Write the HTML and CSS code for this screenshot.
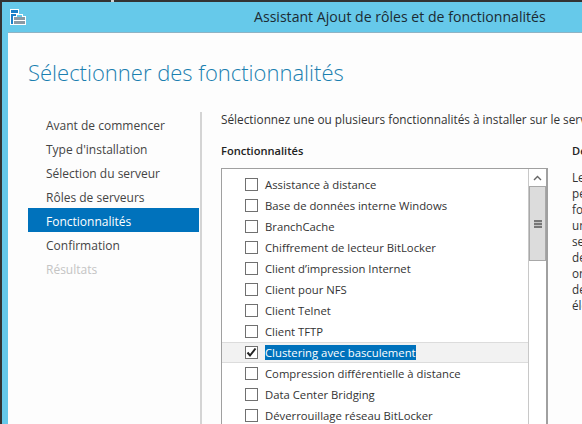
FILE: index.html
```html
<!DOCTYPE html>
<html lang="fr">
<head>
  <meta charset="UTF-8">
  <title>Assistant Ajout de rôles et de fonctionnalités</title>
  <link rel="stylesheet" href="styles.css">
</head>
<body>
  <div class="window">
    <header class="titlebar">
      <svg class="app-icon" width="16" height="16" viewBox="0 0 16 16">
        <path d="M0 0h9v16H0z" fill="#fff"/>
        <path d="M1 1h7v3H1zM1 5h7v10H1z" fill="#1a7fc8"/>
        <path d="M3 7h13v9H3zM6 5h7v2H6z" fill="#fff"/>
        <path d="M4 8h11v3H4zM4 12h11v3H4z" fill="#8a9aa5"/>
        <path d="M7 6h5v2H7z" fill="#66c9ea"/>
      </svg>
      <h2 class="wizard-name">Assistant Ajout de rôles et de fonctionnalités</h2>
    </header>
    <div class="content">
      <h1 class="page-title">Sélectionner des fonctionnalités</h1>
      <div class="columns">
        <nav class="steps">
          <a>Avant de commencer</a>
          <a>Type d'installation</a>
          <a>Sélection du serveur</a>
          <a>Rôles de serveurs</a>
          <a class="current">Fonctionnalités</a>
          <a>Confirmation</a>
          <a class="disabled">Résultats</a>
        </nav>
        <section class="panel">
          <p class="intro">Sélectionnez une ou plusieurs fonctionnalités à installer sur le serveur sélectionné.</p>
          <div class="panel-cols">
            <div class="features">
              <h3 class="label">Fonctionnalités</h3>
              <div class="listbox">
                <ul class="feature-list">
                  <li><span class="box"></span><span>Assistance à distance</span></li>
                  <li><span class="box"></span><span>Base de données interne Windows</span></li>
                  <li><span class="box"></span><span>BranchCache</span></li>
                  <li><span class="box"></span><span>Chiffrement de lecteur BitLocker</span></li>
                  <li><span class="box"></span><span>Client d’impression Internet</span></li>
                  <li><span class="box"></span><span>Client pour NFS</span></li>
                  <li><span class="box"></span><span>Client Telnet</span></li>
                  <li><span class="box"></span><span>Client TFTP</span></li>
                  <li class="selected">
                    <span class="box">
                      <svg width="11" height="11" viewBox="0 0 11 11"><path d="M1.500 5.500l2.500 3 5.500-7" fill="none" stroke="#222" stroke-width="2"/></svg>
                    </span>
                    <span class="hl">Clustering avec basculement</span>
                  </li>
                  <li><span class="box"></span><span>Compression différentielle à distance</span></li>
                  <li><span class="box"></span><span>Data Center Bridging</span></li>
                  <li><span class="box"></span><span>Déverrouillage réseau BitLocker</span></li>
                </ul>
                <div class="scrollbar">
                  <div class="arrow">
                    <svg width="9" height="6" viewBox="0 0 9 6"><path d="M1 5l3.500-3.500L8 5" fill="none" stroke="#666" stroke-width="1.400"/></svg>
                  </div>
                  <div class="thumb"><span class="grip"></span></div>
                </div>
              </div>
            </div>
            <aside class="description">
              <h3 class="label">Description</h3>
              <p>Le clustering</p>
              <p>permet à des</p>
              <p>fonctionner</p>
              <p>un service</p>
              <p>serveurs</p>
              <p>des services</p>
              <p>ont une</p>
              <p>de</p>
              <p>élevée</p>
            </aside>
          </div>
        </section>
      </div>
    </div>
  </div>
</body>
</html>
```

FILE: styles.css
```css
html, body {
  margin: 0;
  height: 100%;
  overflow: hidden;
}
body {
  font-family: "Open Sans", "Noto Sans", sans-serif;
  font-size: 12px;
  color: #333;
  background: #fff;
}
.window {
  height: 424px;
  box-sizing: border-box;
  border-top: 2px solid #333;
  border-left: 2px solid #333;
  background: #66c9ea;
  padding-left: 6px;
  display: flex;
  flex-direction: column;
  position: relative;
}
/* little notch of whatever is behind the window */
.window::before {
  content: "";
  position: absolute;
  left: 109px;
  top: -2px;
  width: 3px;
  height: 2px;
  background: #d0d0d0;
}
.titlebar {
  height: 30px;
  flex: none;
  margin-left: -6px;
  padding-left: 8px;
  display: flex;
  align-items: flex-start;
  position: relative;
}
.app-icon {
  margin-top: 7px;
}
.wizard-name {
  margin: 0;
  font-size: 14.100px;
  font-weight: 400;
  color: #1c2b33;
  position: absolute;
  left: 252px;
  top: 5px;
}
.content {
  flex: 1;
  background: #fdfdfd;
  border-top: 1px solid #8fb3c4;
  overflow: hidden;
}
.page-title {
  margin: 0;
  padding: 23px 0 0 20px;
  height: 56px;
  box-sizing: border-box;
  font-size: 22px;
  font-weight: 300;
  line-height: 32px;
  color: #1a7fb0;
}
.columns {
  display: flex;
  margin-left: 20px;
  padding-top: 23px;
}
.steps {
  width: 171px;
  flex: none;
  display: flex;
  flex-direction: column;
}
.steps a {
  height: 22px;
  line-height: 24px;
  padding: 2px 0 0 18px;
  color: #444;
}
.steps a.current {
  background: #0072bc;
  color: #fff;
}
.steps a.disabled {
  color: #c4c4c4;
}
.panel {
  flex: 1;
  min-width: 0;
  margin-left: 1px;
  border-left: 2px solid #d4d4d4;
  padding-left: 19px;
  height: 320px;
  overflow: hidden;
}
.intro {
  margin: 0;
  font-size: 11.800px;
  line-height: 15px;
  height: 16px;
  white-space: nowrap;
}
.panel-cols {
  display: flex;
  margin-top: 14px;
}
.label {
  margin: 0;
  font-size: 11.100px;
  font-weight: 600;
  line-height: 18px;
  height: 16px;
  color: #222;
}
.features {
  width: 327px;
  flex: none;
}
.listbox {
  margin-top: 10px;
  height: 280px;
  background: #fff;
  border: 1px solid #a0a0a0;
  border-width: 1px 2px 0 1px;
  display: flex;
}
.feature-list {
  list-style: none;
  margin: 0;
  padding: 5px 0 0;
  flex: 1;
  min-width: 0;
  font-size: 11.300px;
}
.feature-list li {
  height: 21px;
  display: flex;
  align-items: center;
  padding-left: 23px;
  box-sizing: border-box;
  white-space: nowrap;
}
.box {
  width: 13px;
  height: 13px;
  border: 1px solid #707070;
  box-sizing: border-box;
  margin-right: 7px;
  background: #fff;
  flex: none;
  display: flex;
  align-items: center;
  justify-content: center;
}
.feature-list li.selected {
  background: #f2f2f2;
  border-top: 1px solid #dcdcdc;
  border-bottom: 1px solid #dcdcdc;
}
.hl {
  background: #0072bc;
  color: #fff;
  line-height: 15px;
}
.scrollbar {
  width: 17px;
  flex: none;
  border-left: 1px solid #c8c8c8;
}
.arrow {
  height: 17px;
  display: flex;
  align-items: center;
  justify-content: center;
}
.thumb {
  height: 75px;
  box-sizing: border-box;
  border: 1px solid #a8a8a8;
  background: #dcdcdc;
  display: flex;
  align-items: center;
  justify-content: center;
}
.grip {
  width: 8px;
  height: 8px;
  background: repeating-linear-gradient(#777 0 2px, #c4c4c4 2px 3px);
}
.description {
  margin-left: 24px;
  width: 80px;
  white-space: nowrap;
  overflow: hidden;
}
.description .label {
  margin-bottom: 11px;
}
.description p {
  margin: 0;
  font-size: 11.700px;
  line-height: 16px;
}
```
